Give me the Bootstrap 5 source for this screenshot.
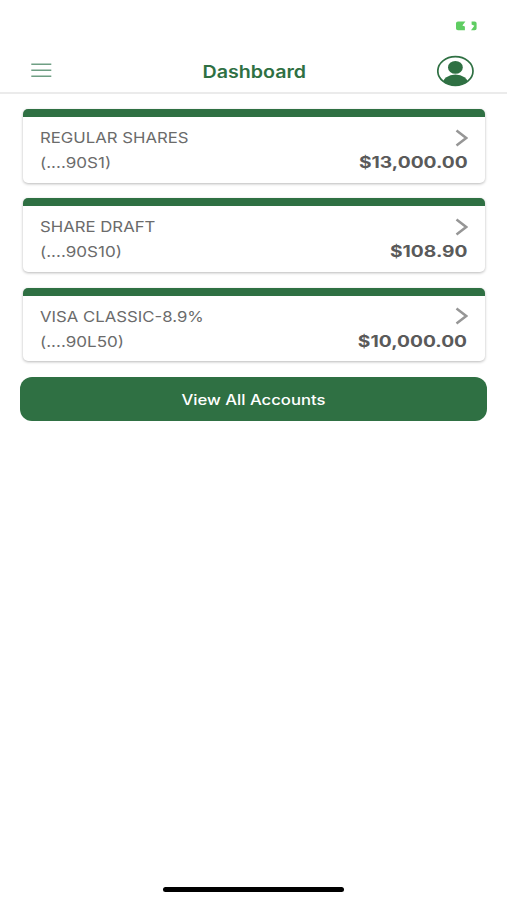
<!DOCTYPE html>
<html lang="en">
<head>
<meta charset="utf-8">
<meta name="viewport" content="width=device-width, initial-scale=1">
<title>Dashboard</title>
<link href="https://cdn.jsdelivr.net/npm/bootstrap@5.3.0/dist/css/bootstrap.min.css" rel="stylesheet">
<style>
  :root { --brand: #2f7043; }
  body { font-family: Inter, "Liberation Sans", sans-serif; background: #fff; }
  svg { display: block; }
  .screen { height: 900px; overflow: hidden; }
  .status { height: 48px; padding: 21px 30px 0 0; }
  .topbar { height: 46px; padding: 1px 32px 0 31px; border-bottom: 2px solid #ebebeb; }
  .menu-slot { width: 41px; }
  .wide { display: inline-block; white-space: nowrap; transform: scaleX(1.14); transform-origin: left center; }
  .number { transform: scaleX(1.16); }
  .title { color: var(--brand); font-size: 16.8px; font-weight: 600; line-height: 24px; padding-top: 2px; transform: scaleX(1.17); transform-origin: center; }
  .accounts { padding: 15px 22px 0 23px; gap: 15.5px; }
  .account { height: 73.8px; border: 0; border-top: 8px solid var(--brand); border-radius: 5px; padding: 9px 17.5px 0 17px; box-shadow: 0 1px 3px rgba(0,0,0,.28); color: #6b6b6b; font-size: 14.7px; line-height: 25px; }
  .amount { color: #5a5a5a; font-size: 15.5px; font-weight: 700; line-height: 23px; margin-bottom: 2px; transform: scaleX(1.24); transform-origin: right center; }
  .view-all { height: 44px; margin: 15.5px 20px 0 20px; background: var(--brand); color: #fff; border: 0; border-radius: 12px; padding: 1px 0 0; font-size: 14px; font-weight: 500; line-height: 43px; }
  .view-all .wide { transform: scaleX(1.19); transform-origin: center; }
  .home-bar { width: 181px; height: 5px; border-radius: 3px; background: #000; margin-bottom: 8px; }
</style>
<script src="https://cdn.jsdelivr.net/npm/bootstrap@5.3.0/dist/js/bootstrap.bundle.min.js"></script>
</head>
<body>
<div class="screen d-flex flex-column">
  <div class="status d-flex justify-content-end">
    <svg width="21" height="10" viewBox="0 0 21 10" fill="#5fcd62"><path d="M2 .5H9.4L6.4 4.6L8.9 5.6V9.2H2Q0 9.2 0 7.5V2.2Q0 .5 2 .5Z"/><path d="M15.6.5H18.6Q20.6.5 20.6 2.2V7.5Q20.6 9.2 18.6 9.2H15L18.4 4.8L15.6 3.6Z"/></svg>
  </div>
  <header class="topbar d-flex align-items-center justify-content-between">
    <div class="menu-slot"><svg width="21" height="16" viewBox="0 0 21 16" stroke="#6f9f84" stroke-width="1.5"><path d="M.3 1.2H20.3M.3 7.2H20.3M.3 13.3H20.3"/></svg></div>
    <h1 class="title wide m-0">Dashboard</h1>
    <svg width="38" height="32" viewBox="0 0 38 32"><defs><clipPath id="face"><ellipse cx="18.4" cy="16" rx="18" ry="14.6"/></clipPath></defs><g clip-path="url(#face)" fill="#2f7043"><ellipse cx="18.4" cy="12.4" rx="7.4" ry="6.4"/><ellipse cx="18.4" cy="28.8" rx="12.8" ry="9.2"/></g><ellipse cx="18.4" cy="16" rx="17.6" ry="14.4" fill="none" stroke="#2f7043" stroke-width="1.7"/></svg>
  </header>
  <main>
    <div class="accounts d-flex flex-column">
      <div class="card account">
        <div class="d-flex justify-content-between align-items-center"><span class="wide">REGULAR SHARES</span><svg width="13" height="20" viewBox="0 0 13 20" fill="none" stroke="#969696" stroke-width="2.5"><path d="M1.5 1.5L11.2 9L1.5 16.5"/></svg></div>
        <div class="d-flex justify-content-between align-items-center"><span class="wide number">(....90S1)</span><span class="wide amount">$13,000.00</span></div>
      </div>
      <div class="card account">
        <div class="d-flex justify-content-between align-items-center"><span class="wide">SHARE DRAFT</span><svg width="13" height="20" viewBox="0 0 13 20" fill="none" stroke="#969696" stroke-width="2.5"><path d="M1.5 1.5L11.2 9L1.5 16.5"/></svg></div>
        <div class="d-flex justify-content-between align-items-center"><span class="wide number">(....90S10)</span><span class="wide amount">$108.90</span></div>
      </div>
      <div class="card account">
        <div class="d-flex justify-content-between align-items-center"><span class="wide">VISA CLASSIC-8.9%</span><svg width="13" height="20" viewBox="0 0 13 20" fill="none" stroke="#969696" stroke-width="2.5"><path d="M1.5 1.5L11.2 9L1.5 16.5"/></svg></div>
        <div class="d-flex justify-content-between align-items-center"><span class="wide number">(....90L50)</span><span class="wide amount">$10,000.00</span></div>
      </div>
    </div>
    <div class="d-grid"><button type="button" class="btn view-all"><span class="wide">View All Accounts</span></button></div>
  </main>
  <div class="home-bar mt-auto mx-auto flex-shrink-0"></div>
</div>
</body>
</html>
